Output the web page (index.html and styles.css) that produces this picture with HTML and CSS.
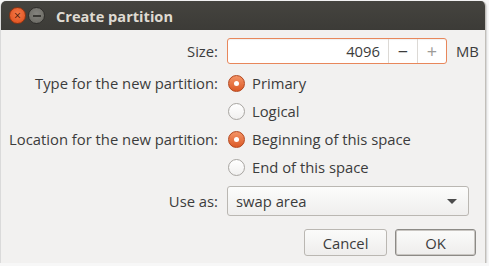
FILE: index.html
```html
<!DOCTYPE html>
<html lang="en">
<head>
    <meta charset="UTF-8">
    <title>Create partition</title>
    <link rel="stylesheet" href="styles.css">
</head>
<body>
    <div class="window">
        <div class="titlebar">
            <span class="tb-btn close">&times;</span>
            <span class="tb-btn minimize"></span>
            <span class="title">Create partition</span>
        </div>

        <div class="content">
            <div class="form">
                <label class="label">Size:</label>
                <div class="size-row">
                    <div class="spin">
                        <span class="spin-value">4096</span>
                        <span class="spin-btn minus">&minus;</span>
                        <span class="spin-btn plus">+</span>
                    </div>
                    <span class="unit">MB</span>
                </div>

                <label class="label">Type for the new partition:</label>
                <div class="radio checked"><span class="dot"></span>Primary</div>
                <div></div>
                <div class="radio"><span class="dot"></span>Logical</div>

                <label class="label">Location for the new partition:</label>
                <div class="radio checked"><span class="dot"></span>Beginning of this space</div>
                <div></div>
                <div class="radio"><span class="dot"></span>End of this space</div>

                <label class="label">Use as:</label>
                <div class="combo">
                    <span>swap area</span>
                    <span class="arrow"></span>
                </div>
            </div>

            <div class="buttons">
                <button class="btn cancel">Cancel</button>
                <button class="btn default">OK</button>
            </div>
        </div>
    </div>
</body>
</html>
```

FILE: styles.css
```css
body {
    margin: 0;
    background: #f7f7f7;
    font-family: "Open Sans", "Noto Sans", sans-serif;
    font-size: 14.8px;
    color: #3c3c3c;
}
.window {
    margin: 1px 0 0 1px;
    width: 484px;
    height: 262px;
    background: #f2f1f0;
    border-radius: 5px 5px 0 0;
    border-right: 1px solid #c2bfba;
    box-shadow: 0 1px 2px rgba(0, 0, 0, 0.45);
    overflow: hidden;
}
.titlebar {
    height: 29px;
    display: flex;
    align-items: center;
    padding-left: 8px;
    background: linear-gradient(#45443f, #3c3b37);
}
.tb-btn {
    width: 15px;
    height: 15px;
    border-radius: 50%;
    display: flex;
    align-items: center;
    justify-content: center;
    font-size: 12px;
    line-height: 1;
}
.close {
    background: radial-gradient(circle at 50% 40%, #f47a4a, #dc4a17);
    border: 1px solid #8e3413;
    color: #4a1a08;
}
.minimize {
    margin-left: 2px;
    background: radial-gradient(circle at 50% 40%, #84837e, #67665f);
    border: 1px solid #2f2e2b;
}
.minimize::after {
    content: "";
    width: 8px;
    height: 2px;
    background: #3a3935;
}
.title {
    margin-left: 11px;
    font-weight: bold;
    font-size: 14.6px;
    color: #dfdbd2;
}
.content {
    padding: 8px 9px 0 0;
}
.form {
    display: grid;
    grid-template-columns: 217px 1fr;
    grid-template-rows: 26px repeat(4, 18px) 30px;
    column-gap: 9px;
    row-gap: 10px;
    align-items: center;
}
.label {
    justify-self: end;
    white-space: nowrap;
}
.size-row {
    display: flex;
    align-items: center;
    height: 26px;
}
.spin {
    display: flex;
    width: 218px;
    height: 24px;
    border: 1px solid #e8875b;
    border-radius: 3px;
    background: #fff;
    box-shadow: inset 0 1px 1px rgba(0, 0, 0, 0.06);
}
.spin-value {
    flex: 1;
    text-align: right;
    padding-right: 8px;
    line-height: 24px;
}
.spin-btn {
    width: 28px;
    border-left: 1px solid #dcd9d5;
    display: flex;
    align-items: center;
    justify-content: center;
    font-size: 18px;
}
.minus {
    color: #3c3c3c;
}
.plus {
    color: #9d9b97;
}
.unit {
    margin-left: 9px;
}
.radio {
    display: flex;
    align-items: center;
    white-space: nowrap;
}
.radio .dot {
    width: 15px;
    height: 15px;
    margin: 0 7px 0 1px;
    border-radius: 50%;
    border: 1px solid #a8a5a1;
    background: linear-gradient(#ffffff, #f1f0ef);
    display: flex;
    align-items: center;
    justify-content: center;
}
.radio.checked .dot {
    border-color: #b3461d;
    background: linear-gradient(#f39467, #dc5a27);
}
.radio.checked .dot::after {
    content: "";
    width: 5px;
    height: 5px;
    border-radius: 50%;
    background: #fff;
}
.combo {
    box-sizing: border-box;
    width: 242px;
    height: 30px;
    border: 1px solid #bab7b2;
    border-radius: 3px;
    background: linear-gradient(#fcfcfb, #efeeed);
    display: flex;
    align-items: center;
    justify-content: space-between;
    padding: 0 11px 0 8px;
}
.arrow {
    width: 0;
    height: 0;
    border-left: 5px solid transparent;
    border-right: 5px solid transparent;
    border-top: 5px solid #4c4c4c;
}
.buttons {
    display: flex;
    justify-content: flex-end;
    gap: 8px;
    margin-top: 13px;
}
.btn {
    height: 27px;
    font-family: inherit;
    font-size: 14.8px;
    color: #3c3c3c;
    border: 1px solid #bab7b2;
    border-radius: 3px;
    background: linear-gradient(#fbfbfa, #eeedec);
}
.btn.cancel {
    width: 83px;
}
.btn.default {
    width: 81px;
    border: 1px solid #8c8a86;
    box-shadow: inset 0 0 0 1px #c9c6c2;
}
```
